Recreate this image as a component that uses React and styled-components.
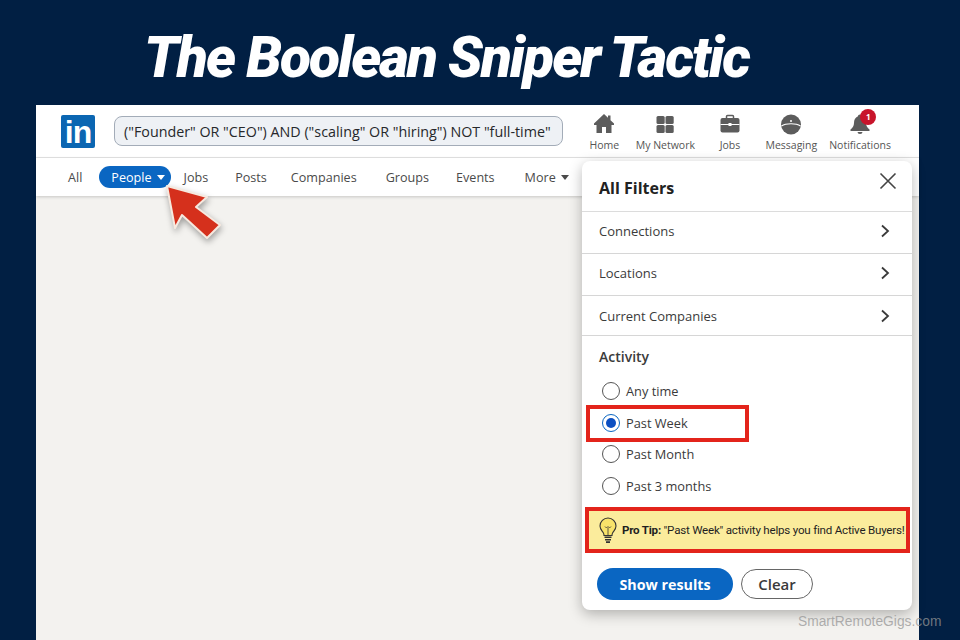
import React from "react";
import styled, { createGlobalStyle } from "styled-components";

const NAVY = "#011f43";
const BLUE = "#0a66c2";
const RED = "#e3241b";
const INK = "#3a3a3a";

const Global = createGlobalStyle`
  html, body, #root { margin: 0; height: 100%; }
  body { background: ${NAVY}; font-family: "Open Sans", "Liberation Sans", sans-serif; overflow: hidden; }
`;

const Page = styled.div`
  width: 960px;
  height: 640px;
  display: flex;
  flex-direction: column;
  padding: 0 41px 0 36px;
  box-sizing: border-box;
`;

const Title = styled.h1`
  margin: 0;
  height: 105px;
  padding: 24px 0 0 108px;
  box-sizing: border-box;
  font-family: Roboto, "Open Sans", sans-serif;
  font-size: 57px;
  line-height: 68px;
  font-weight: 900;
  font-style: italic;
  letter-spacing: -2px;
  color: #fff;
  white-space: nowrap;
`;

const Window = styled.div`
  position: relative;
  flex: 1;
  display: flex;
  flex-direction: column;
  background: #f3f2ef;
`;

const TopBar = styled.header`
  height: 53px;
  background: #fff;
  border-bottom: 1px solid #e4e4e4;
  display: flex;
  align-items: center;
  padding: 0 28px 0 25px;
  box-sizing: border-box;
`;

const Logo = styled.div`
  width: 34px;
  height: 33px;
  flex: none;
  border-radius: 2px;
  background: #0b66b2;
  color: #fff;
  font-family: "Liberation Sans", sans-serif;
  font-weight: 700;
  font-size: 32px;
  line-height: 35px;
  text-align: center;
  letter-spacing: -1px;
`;

const Search = styled.div`
  margin-left: 19px;
  width: 449px;
  height: 30px;
  box-sizing: border-box;
  border: 1px solid #a3acb8;
  border-radius: 8px;
  background: #eef1f5;
  padding: 0 9px;
  display: flex;
  align-items: center;
  font-size: 14.3px;
  color: #26282b;
  white-space: nowrap;
`;

const NavList = styled.nav`
  margin-left: auto;
  display: flex;
  align-items: flex-start;
  padding-top: 2px;
`;

const NavItem = styled.div`
  display: flex;
  flex-direction: column;
  align-items: center;
  gap: 3px;
  margin-right: ${({ $gap }) => $gap}px;
  font-size: 10.5px;
  color: #555;
  white-space: nowrap;
  position: relative;
`;

const Badge = styled.span`
  position: absolute;
  top: -4px;
  left: 31px;
  width: 16px;
  height: 16px;
  border-radius: 50%;
  background: #c8142b;
  color: #fff;
  font-size: 8px;
  font-weight: 700;
  line-height: 16px;
  text-align: center;
`;

const Tabs = styled.div`
  height: 38px;
  background: #fff;
  box-shadow: 0 1px 3px rgba(0, 0, 0, 0.18);
  display: flex;
  align-items: center;
  padding-left: 32px;
  font-size: 12.6px;
  font-weight: 500;
  color: #4a4a4a;
`;

const Tab = styled.span`
  margin-right: ${({ $gap }) => $gap}px;
  display: inline-flex;
  align-items: center;
  gap: 5px;
  white-space: nowrap;
`;

const ActiveTab = styled(Tab)`
  height: 22px;
  padding: 0 6px 0 12px;
  border-radius: 11px;
  background: ${BLUE};
  color: #fff;
`;

const Caret = styled.i`
  width: 0;
  height: 0;
  border-left: 4px solid transparent;
  border-right: 4px solid transparent;
  border-top: 5px solid currentColor;
`;

const Pointer = styled.svg`
  position: absolute;
  left: 125px;
  top: 77px;
  filter: drop-shadow(1px 3px 3px rgba(0, 0, 0, 0.35));
`;

const Panel = styled.aside`
  position: absolute;
  left: 546px;
  top: 56px;
  width: 330px;
  height: 449px;
  background: #fff;
  border-radius: 8px;
  box-shadow: 0 4px 14px rgba(0, 0, 0, 0.28);
  display: flex;
  flex-direction: column;
`;

const PanelHead = styled.div`
  height: 51px;
  flex: none;
  padding: 4px 15px 0 17px;
  box-sizing: border-box;
  display: flex;
  align-items: center;
  justify-content: space-between;
  border-bottom: 1px solid #dcdcdc;
  font-size: 16px;
  font-weight: 700;
  color: #222;
`;

const CloseIcon = styled.svg`
  margin-bottom: 14px;
`;

const Row = styled.div`
  height: ${({ $h }) => $h}px;
  flex: none;
  box-sizing: border-box;
  padding: 0 21px ${({ $low }) => ($low ? 0 : 3)}px 17px;
  display: flex;
  align-items: center;
  justify-content: space-between;
  border-bottom: 1px solid #d6d6d6;
  font-size: 13px;
  font-weight: 500;
  color: #3b3b3b;
`;

const Section = styled.div`
  padding: 11px 17px 0;
  height: 171px;
  flex: none;
  box-sizing: border-box;
`;

const SectionTitle = styled.div`
  font-size: 14px;
  font-weight: 600;
  color: #3b3b3b;
  line-height: 20px;
  margin-bottom: 15px;
`;

const Radios = styled.div`
  display: flex;
  flex-direction: column;
  gap: 13.5px;
`;

const Radio = styled.label`
  display: flex;
  align-items: center;
  gap: 6px;
  height: 18px;
  margin-left: 3px;
  font-size: 12.8px;
  font-weight: 500;
  color: ${INK};
  position: relative;
`;

const RadioDot = styled.span`
  width: 18px;
  height: 18px;
  box-sizing: border-box;
  border-radius: 50%;
  border: 1.5px solid ${({ $on }) => ($on ? BLUE : "#555")};
  display: flex;
  align-items: center;
  justify-content: center;
  &::after {
    content: "";
    width: 10px;
    height: 10px;
    border-radius: 50%;
    background: ${({ $on }) => ($on ? "#0b4fc2" : "transparent")};
  }
`;

const Highlight = styled.span`
  position: absolute;
  left: -16px;
  top: -9px;
  width: 163px;
  height: 37px;
  box-sizing: border-box;
  border: 4px solid ${RED};
`;

const Tip = styled.div`
  margin: 0 2px 0 3px;
  height: 46px;
  flex: none;
  box-sizing: border-box;
  border: 4px solid ${RED};
  background: #fbec9c;
  display: flex;
  align-items: center;
  padding-left: 9px;
  gap: 4px;
  font-family: Roboto, "Liberation Sans", sans-serif;
  font-size: 11.6px;
  letter-spacing: -0.22px;
  color: #1f1f1f;
  white-space: nowrap;
`;

const Strong = styled.b`
  font-weight: 700;
`;

const Actions = styled.div`
  flex: 1;
  display: flex;
  align-items: center;
  gap: 8px;
  padding: 5px 0 0 15px;
`;

const Primary = styled.div`
  width: 136px;
  height: 32px;
  border-radius: 16px;
  background: ${BLUE};
  color: #fff;
  font-size: 14.3px;
  font-weight: 700;
  display: flex;
  align-items: center;
  justify-content: center;
`;

const Ghost = styled.div`
  width: 72px;
  height: 30px;
  box-sizing: border-box;
  border: 1px solid #666;
  border-radius: 15px;
  color: #3a3a3a;
  font-size: 15px;
  font-weight: 600;
  display: flex;
  align-items: center;
  justify-content: center;
`;

const Watermark = styled.div`
  position: absolute;
  left: 762px;
  top: 509px;
  font-family: "Liberation Sans", sans-serif;
  font-size: 13.8px;
  color: rgba(150, 150, 150, 0.75);
  white-space: nowrap;
`;

const Chevron = () => (
  <svg width="12" height="14" viewBox="0 0 12 14" fill="none" stroke="#3a3a3a" strokeWidth="1.8">
    <path d="M3 1.5 9 7l-6 5.5" />
  </svg>
);

const GREY = "#5c5c5c";

const HomeIcon = () => (
  <svg width="22" height="22" viewBox="0 0 22 22" fill={GREY}>
    <path d="M11 1 1 10.500v1.500h2.500v8h5.500v-6h4v6h5.500v-8H21v-1.500L17.500 7.200V2.500h-2.500v2.300z" />
  </svg>
);

const NetworkIcon = () => (
  <svg width="22" height="22" viewBox="0 0 22 22" fill={GREY}>
    <rect x="2.500" y="3" width="8.200" height="8" rx="1.500" />
    <rect x="11.500" y="3" width="8.200" height="8" rx="1.500" />
    <rect x="2.500" y="12" width="8.200" height="8" rx="1.500" />
    <rect x="11.500" y="12" width="8.200" height="8" rx="1.500" />
  </svg>
);

const JobsIcon = () => (
  <svg width="22" height="22" viewBox="0 0 22 22">
    <path fill="none" stroke={GREY} strokeWidth="1.500" d="M7.500 5V3.500a1 1 0 0 1 1-1h5a1 1 0 0 1 1 1V5" />
    <rect x="1.500" y="5" width="19" height="14.500" rx="2" fill={GREY} />
    <rect x="1.500" y="11" width="19" height="1" fill="#fff" />
    <rect x="9.500" y="10" width="3" height="3" fill="#fff" />
  </svg>
);

const MessageIcon = () => (
  <svg width="22" height="22" viewBox="0 0 22 22">
    <circle cx="11" cy="11.500" r="10" fill={GREY} />
    <path d="M1.500 13C6 10 16 10 20.500 13" fill="none" stroke="#fff" strokeWidth="1.200" />
    <circle cx="11" cy="8" r="1" fill="#fff" />
  </svg>
);

const BellIcon = () => (
  <svg width="24" height="22" viewBox="0 0 24 22" fill={GREY}>
    <path d="M12 1.500c-1.200 0-2 .8-2 1.800C7 4.500 6 7 6 10c0 3-1.500 5-3.500 6.500V18h19v-1.500C19.500 15 18 13 18 10c0-3-1-5.500-4-6.700 0-1-.8-1.800-2-1.800z" />
    <path d="M9.500 19h5a2.500 2 0 0 1-5 0z" />
  </svg>
);

const Bulb = () => (
  <svg width="20" height="28" viewBox="0 0 20 28" fill="none" stroke="#333" strokeWidth="1.100" style={{ flex: "none" }}>
    <path fill="#f8e36a" d="M10 2a8 8 0 0 0-8 8c0 3.200 2 4.800 3.300 6.800.6 1 .7 1.700.7 2.700h8c0-1 .1-1.700.7-2.700C16 14.800 18 13.200 18 10a8 8 0 0 0-8-8z" />
    <path d="M7 10.500l1.500 1.500L10 10.500l1.500 1.500 1.500-1.500M10 12v7" strokeWidth="0.800" />
    <path fill="#333" d="M6.500 20.500h7v1.500h-7zM7 23h6v1.500H7zM8 25.200h4V27H8z" stroke="none" />
  </svg>
);

const NAV = [
  ["Home", <HomeIcon />, 16.5],
  ["My Network", <NetworkIcon />, 24],
  ["Jobs", <JobsIcon />, 24.5],
  ["Messaging", <MessageIcon />, 12],
];

const TABS = [
  ["Jobs", 27],
  ["Posts", 24],
  ["Companies", 29],
  ["Groups", 27],
  ["Events", 30],
];

const App = () => (
  <Page>
    <Global />
    <Title>The Boolean Sniper Tactic</Title>
    <Window>
      <TopBar>
        <Logo>in</Logo>
        <Search>("Founder" OR "CEO") AND ("scaling" OR "hiring") NOT "full-time"</Search>
        <NavList>
          {NAV.map(([label, icon, gap]) => (
            <NavItem key={label} $gap={gap}>
              {icon}
              {label}
            </NavItem>
          ))}
          <NavItem $gap={0}>
            <BellIcon />
            Notifications
            <Badge>1</Badge>
          </NavItem>
        </NavList>
      </TopBar>
      <Tabs>
        <Tab $gap={17}>All</Tab>
        <ActiveTab $gap={13}>
          People <Caret />
        </ActiveTab>
        {TABS.map(([label, gap]) => (
          <Tab key={label} $gap={gap}>
            {label}
          </Tab>
        ))}
        <Tab $gap={0}>
          More <Caret />
        </Tab>
      </Tabs>
      <Pointer width="66" height="64" viewBox="0 0 66 64">
        <path d="M6 4 L46 15 L35 25 L59 43 L46 56 L21 33 L14 46 Z" fill="#d5301c" stroke="#f6e9df" strokeWidth="2" strokeLinejoin="round" />
      </Pointer>
      <Panel>
        <PanelHead>
          All Filters
          <CloseIcon width="18" height="18" viewBox="0 0 18 18" stroke="#444" strokeWidth="1.600">
            <path d="M1.500 1.500 16.500 16.500M16.500 1.500 1.500 16.500" />
          </CloseIcon>
        </PanelHead>
        <Row $h={42}>
          Connections
          <Chevron />
        </Row>
        <Row $h={42}>
          Locations
          <Chevron />
        </Row>
        <Row $h={40} $low>
          Current Companies
          <Chevron />
        </Row>
        <Section>
          <SectionTitle>Activity</SectionTitle>
          <Radios>
            <Radio>
              <RadioDot />
              Any time
            </Radio>
            <Radio>
              <RadioDot $on />
              Past Week
              <Highlight />
            </Radio>
            <Radio>
              <RadioDot />
              Past Month
            </Radio>
            <Radio>
              <RadioDot />
              Past 3 months
            </Radio>
          </Radios>
        </Section>
        <Tip>
          <Bulb />
          <span>
            <Strong>Pro Tip:</Strong> "Past Week" activity helps you find Active Buyers!
          </span>
        </Tip>
        <Actions>
          <Primary>Show results</Primary>
          <Ghost>Clear</Ghost>
        </Actions>
      </Panel>
      <Watermark>SmartRemoteGigs.com</Watermark>
    </Window>
  </Page>
);

export default App;
